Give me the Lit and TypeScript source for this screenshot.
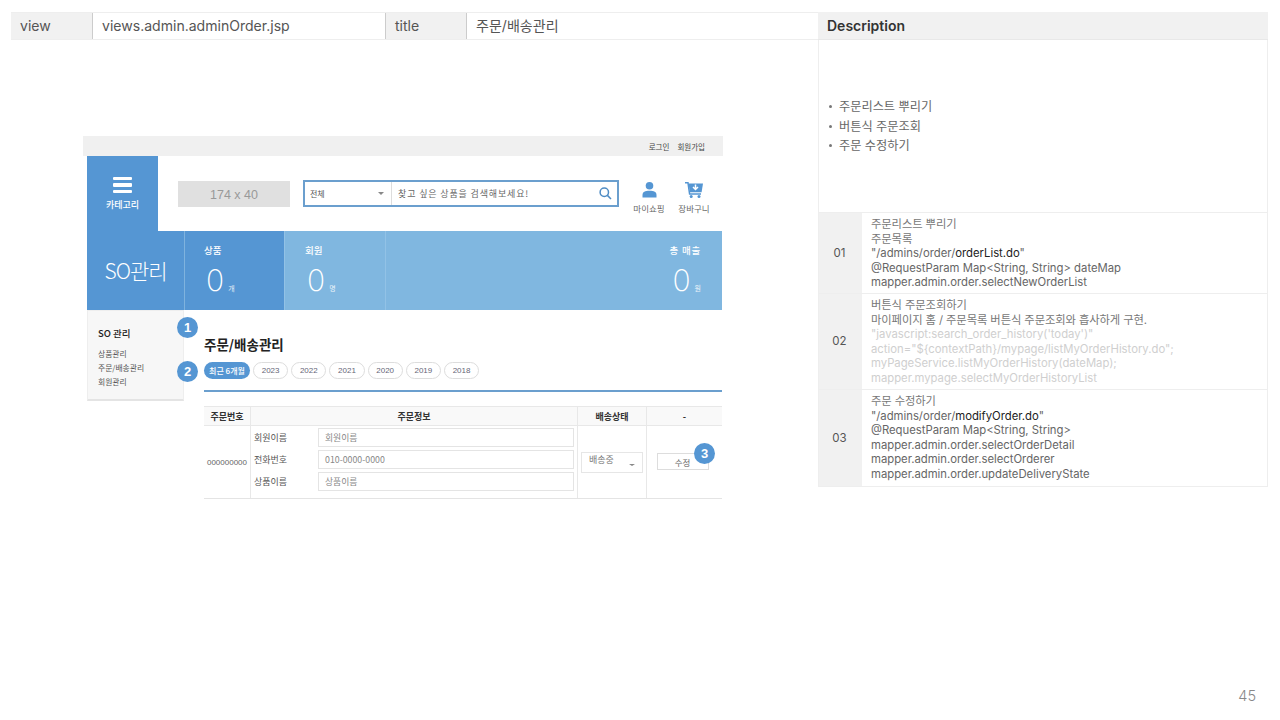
import { LitElement, html, css } from "lit";
import { customElement } from "lit/decorators.js";

@customElement("app-root")
export class AppRoot extends LitElement {
  static styles = css`
    :host { display: block; width: 1280px; height: 720px; background: #fff; overflow: hidden; font-family: Inter, "Noto Sans CJK KR", sans-serif; color: #444; position: relative; }
    .page { display: grid; grid-template-columns: 807px 450px; padding: 12px 0 0 11px; height: 708px; box-sizing: border-box; align-items: start; }
    .meta { display: grid; grid-template-columns: 81px 293px 81px 352px; height: 28px; border-bottom: 1px solid #eee; border-top: 1px solid #eee; box-sizing: border-box; font-size: 14.05px; line-height: 26px; color: #555; }
    .meta div { padding-left: 9px; border-left: 1px solid #ccc; }
    .meta div:first-child { border-left: none; }
    .meta .k { background: #f1f1f1; }
    .right { display: flex; flex-direction: column; }
    .desc-h { height: 28px; background: #f1f1f1; border-bottom: 1px solid #e8e8e8; box-sizing: border-box; font-size: 14px; font-weight: 600; line-height: 27px; padding-left: 9px; color: #333; }
    .desc-b { height: 173px; box-sizing: border-box; border: 1px solid #eee; border-top: none; padding-top: 57px; font-size: 12.2px; line-height: 19.5px; color: #666; }
    .desc-b ul { margin: 0; padding: 0 0 0 10px; list-style: none; }
    .desc-b li { display: flex; gap: 7px; align-items: center; }
    .desc-b li::before { content: ""; width: 3px; height: 3px; border-radius: 50%; background: #777; }
    .row { display: grid; grid-template-columns: 43px 1fr; border: 1px solid #eee; border-top: none; box-sizing: border-box; font-size: 11.3px; line-height: 14.5px; color: #666; }
    .num { background: #f1f1f1; display: flex; align-items: center; justify-content: center; padding-right: 2px; font-size: 11.5px; color: #555; }
    .txt { padding: 4px 0 0 9px; white-space: nowrap; }
    .txt b { font-weight: 400; color: #222; }
    .ko { letter-spacing: -.09px; color: #777; }
    .faint { color: #cfcfcf; }
    .r1 { height: 81px; } .r2 { height: 96px; } .r3 { height: 97px; }
    .pageno { position: absolute; right: 24px; top: 687px; font-size: 14.5px; font-weight: 300; color: #888; }

    .mock { margin: 96px 0 0 72px; width: 640px; font-family: "Noto Sans CJK KR", "Open Sans", sans-serif; position: relative; }
    .util { height: 20px; background: #f0f0f0; display: flex; justify-content: flex-end; align-items: center; gap: 8px; padding-right: 18px; font-size: 7.5px; color: #444; }
    .head { display: flex; align-items: center; height: 75px; padding-left: 4px; }
    .cat { width: 71px; height: 75px; background: #5596d3; color: #fff; display: flex; flex-direction: column; align-items: center; justify-content: center; gap: 5px; font-size: 9px; font-weight: 500; padding-top: 1px; box-sizing: border-box; }
    .burger { width: 19px; height: 16px; display: flex; flex-direction: column; justify-content: space-between; }
    .burger i { height: 3.4px; background: #fff; border-radius: 1px; display: block; }
    .logo { width: 112px; height: 26px; box-sizing: border-box; padding-top: 3px; background: #e0e0e0; color: #999; margin-left: 20px; font: 12.5px "Liberation Sans", sans-serif; display: flex; align-items: center; justify-content: center; }
    .search { width: 316px; height: 27px; box-sizing: border-box; border: 2px solid #6b9fce; margin-left: 13px; display: flex; align-items: center; font-size: 9px; color: #666; }
    .sel { width: 87px; height: 100%; border-right: 1px solid #ddd; display: flex; align-items: center; justify-content: space-between; padding: 0 7px 0 5px; box-sizing: border-box; font-size: 8px; color: #555; }
    .caret { width: 0; height: 0; border-left: 3.5px solid transparent; border-right: 3.5px solid transparent; border-top: 3.5px solid #888; }
    .q { flex: 1; padding-left: 6px; letter-spacing: .85px; }
    .search svg { margin-right: 5px; }
    .ico { display: flex; flex-direction: column; align-items: center; font-size: 8.5px; color: #666; width: 36px; margin-top: 8px; gap: 4px; }
    .ico svg { display: block; }
    .ico.a { margin-left: 12px; } .ico.b { margin-left: 9px; }

    .band { margin-left: 4px; display: grid; grid-template-columns: 98px 99px 101px 337px; height: 79px; color: #fff; font-size: 9.5px; }
    .so { background: #5596d3; font-size: 21px; font-weight: 300; display: flex; align-items: center; justify-content: center; letter-spacing: -1px; border-right: 1px solid #7fb3de; padding-bottom: 2px; box-sizing: border-box; }
    .st { display: flex; flex-direction: column; padding: 12px 0 0 20px; gap: 8px; font-weight: 500; }
    .st.d { background: #5596d3; padding-left: 19px; } .st.l { background: #80b7e0; border-left: 1px solid #92c2e6; }
    .st.e { align-items: flex-end; padding: 12px 21px 0 0; letter-spacing: .8px; }
    .v { display: flex; align-items: flex-end; gap: 4px; font: 200 30px/30px Inter, sans-serif; letter-spacing: 0; margin-left: 2px; }
    .v small { font: 7px/14px "Noto Sans CJK KR", sans-serif; opacity: .85; }

    .body { display: flex; margin-left: 4px; }
    .side { width: 97px; height: 91px; box-sizing: border-box; background: #f7f7f7; border: 1px solid #eee; border-bottom: 2px solid #e4e4e4; padding: 15px 0 0 10px; font-size: 7.8px; color: #555; line-height: 14px; }
    .side h4 { margin: 0 0 7px; font-size: 9.5px; font-weight: 500; color: #222; line-height: 14px; }
    .main { margin-left: 20px; width: 518px; }
    h2 { margin: 25px 0 0; font-size: 13.5px; font-weight: 700; color: #222; line-height: 18px; }
    .pills { display: flex; gap: 3px; margin-top: 9px; }
    .pill { width: 35.2px; height: 17px; box-sizing: border-box; border: 1px solid #ddd; border-radius: 9px; display: flex; align-items: center; justify-content: center; font: 8px "Liberation Sans", sans-serif; color: #667; }
    .pill.on { width: 46px; background: #5596d3; border: none; color: #fff; font: 500 8px "Noto Sans CJK KR", sans-serif; }
    .rule { height: 2px; background: #6b9fce; margin-top: 11px; }
    .tbl { margin-top: 14px; display: grid; grid-template-columns: 46px 327px 69px 76px; grid-template-rows: 19px 72px; border-top: 1px solid #e8e8e8; border-bottom: 1px solid #e4e4e4; font-size: 9px; color: #555; }
    .th { background: #f9f9f9; border-bottom: 1px solid #e8e8e8; border-left: 1px solid #e8e8e8; display: flex; align-items: center; justify-content: center; font-weight: 700; color: #333; }
    .th:first-child { border-left: none; }
    .td { border-left: 1px solid #e8e8e8; display: flex; align-items: center; justify-content: center; position: relative; }
    .noborder { border-left: none; font: 8px "Liberation Sans", sans-serif; color: #666; }
    .info { flex-direction: column; gap: 3px; align-items: stretch; padding: 2px 3px 0 3px; justify-content: flex-start; }
    .frow { display: flex; align-items: center; height: 19px; }
    .frow span { width: 64px; }
    .inp { flex: 1; height: 19px; border: 1px solid #e4e4e4; box-sizing: border-box; padding-left: 6px; display: flex; align-items: center; color: #888; font-size: 8.8px; }
    .dd { width: 62px; height: 21px; box-sizing: border-box; border: 1px solid #e6e6e6; display: flex; align-items: center; justify-content: space-between; padding: 0 7px 0 7px; color: #777; }
    .dd span { margin-top: -6px; }
    .dd .caret { margin-top: 6px; border-left-width: 3px; border-right-width: 3px; border-top-width: 2.5px; }
    .btn { width: 52px; height: 17px; margin: 0 4px 1px 0; box-sizing: border-box; border: 1px solid #ddd; display: flex; align-items: center; justify-content: center; color: #666; font-size: 8.5px; }
    .badge { position: absolute; width: 21px; height: 21px; border-radius: 50%; background: #5596d3; color: #fff; font: 700 13px/21px "Liberation Sans", sans-serif; text-align: center; }
    .b1 { left: 94px; top: 181px; } .b2 { left: 94px; top: 225px; } .b3 { left: 611px; top: 307px; }
  `;

  render() {
    return html`
      <div class="page">
        <div>
          <div class="meta">
            <div class="k">view</div><div>views.admin.adminOrder.jsp</div>
            <div class="k">title</div><div>주문/배송관리</div>
          </div>
          <div class="mock">
            <div class="util"><span>로그인</span><span>회원가입</span></div>
            <div class="head">
              <div class="cat"><div class="burger"><i></i><i></i><i></i></div><span>카테고리</span></div>
              <div class="logo">174 x 40</div>
              <div class="search">
                <div class="sel"><span>전체</span><i class="caret"></i></div>
                <div class="q">찾고 싶은 상품을 검색해보세요!</div>
                <svg width="13" height="13" viewBox="0 0 13 13" fill="none" stroke="#4f8cc4" stroke-width="1.5"><circle cx="5.3" cy="5.3" r="4.2"/><path d="M8.4 8.4L12 12"/></svg>
              </div>
              <div class="ico a">
                <svg width="15" height="16" viewBox="0 0 15 16" fill="#5596d3"><circle cx="7.5" cy="3.8" r="3.8"/><path d="M0.5 15.5v-2.5c0-3 2.5-4.2 7-4.2s7 1.2 7 4.2v2.5z"/></svg>
                <span>마이쇼핑</span>
              </div>
              <div class="ico b">
                <svg width="18" height="16" viewBox="0 0 18 16"><path d="M0 0.8h3l1.6 11.2h11.4" fill="none" stroke="#5596d3" stroke-width="1.5"/><path d="M3.6 1.6H18l-1.4 8.6H4.8z" fill="#5596d3"/><path d="M10.5 2.5v4.2M8 5l2.5 2.5L13 5" fill="none" stroke="#fff" stroke-width="1.5"/><circle cx="6.2" cy="14.4" r="1.5" fill="#5596d3"/><circle cx="14" cy="14.4" r="1.5" fill="#5596d3"/></svg>
                <span>장바구니</span>
              </div>
            </div>
            <div class="band">
              <div class="so">SO관리</div>
              <div class="st d"><span>상품</span><div class="v">0<small>개</small></div></div>
              <div class="st l"><span>회원</span><div class="v">0<small>명</small></div></div>
              <div class="st l e"><span>총 매출</span><div class="v">0<small>원</small></div></div>
            </div>
            <div class="body">
              <div class="side">
                <h4>SO 관리</h4>
                <div>상품관리</div><div>주문/배송관리</div><div>회원관리</div>
              </div>
              <div class="main">
                <h2>주문/배송관리</h2>
                <div class="pills">
                  <div class="pill on">최근 6개월</div>
                  ${["2023","2022","2021","2020","2019","2018"].map(y => html`<div class="pill">${y}</div>`)}
                </div>
                <div class="rule"></div>
                <div class="tbl">
                  <div class="th">주문번호</div><div class="th">주문정보</div><div class="th">배송상태</div><div class="th">-</div>
                  <div class="td noborder">000000000</div>
                  <div class="td info">
                    <div class="frow"><span>회원이름</span><div class="inp">회원이름</div></div>
                    <div class="frow"><span>전화번호</span><div class="inp">010-0000-0000</div></div>
                    <div class="frow"><span>상품이름</span><div class="inp">상품이름</div></div>
                  </div>
                  <div class="td"><div class="dd"><span>배송중</span><i class="caret"></i></div></div>
                  <div class="td"><div class="btn">수정</div></div>
                </div>
              </div>
            </div>
            <div class="badge b1">1</div><div class="badge b2">2</div><div class="badge b3">3</div>
          </div>
        </div>
        <div class="right">
          <div class="desc-h">Description</div>
          <div class="desc-b"><ul><li>주문리스트 뿌리기</li><li>버튼식 주문조회</li><li>주문 수정하기</li></ul></div>
          <div class="row r1"><div class="num">01</div><div class="txt"><span class="ko">주문리스트 뿌리기<br>주문목록</span><br>"/admins/order/<b>orderList.do</b>"<br>@RequestParam Map&lt;String, String&gt; dateMap<br>mapper.admin.order.selectNewOrderList</div></div>
          <div class="row r2"><div class="num">02</div><div class="txt"><span class="ko">버튼식 주문조회하기<br>마이페이지 홈 / 주문목록 버튼식 주문조회와 흡사하게 구현.</span><br><span class="faint">"javascript:search_order_history('today')"<br>action="\${contextPath}/mypage/listMyOrderHistory.do";<br>myPageService.listMyOrderHistory(dateMap);<br>mapper.mypage.selectMyOrderHistoryList</span></div></div>
          <div class="row r3"><div class="num">03</div><div class="txt"><span class="ko">주문 수정하기</span><br>"/admins/order/<b>modifyOrder.do</b>"<br>@RequestParam Map&lt;String, String&gt;<br>mapper.admin.order.selectOrderDetail<br>mapper.admin.order.selectOrderer<br>mapper.admin.order.updateDeliveryState</div></div>
        </div>
      </div>
      <div class="pageno">45</div>
    `;
  }
}
